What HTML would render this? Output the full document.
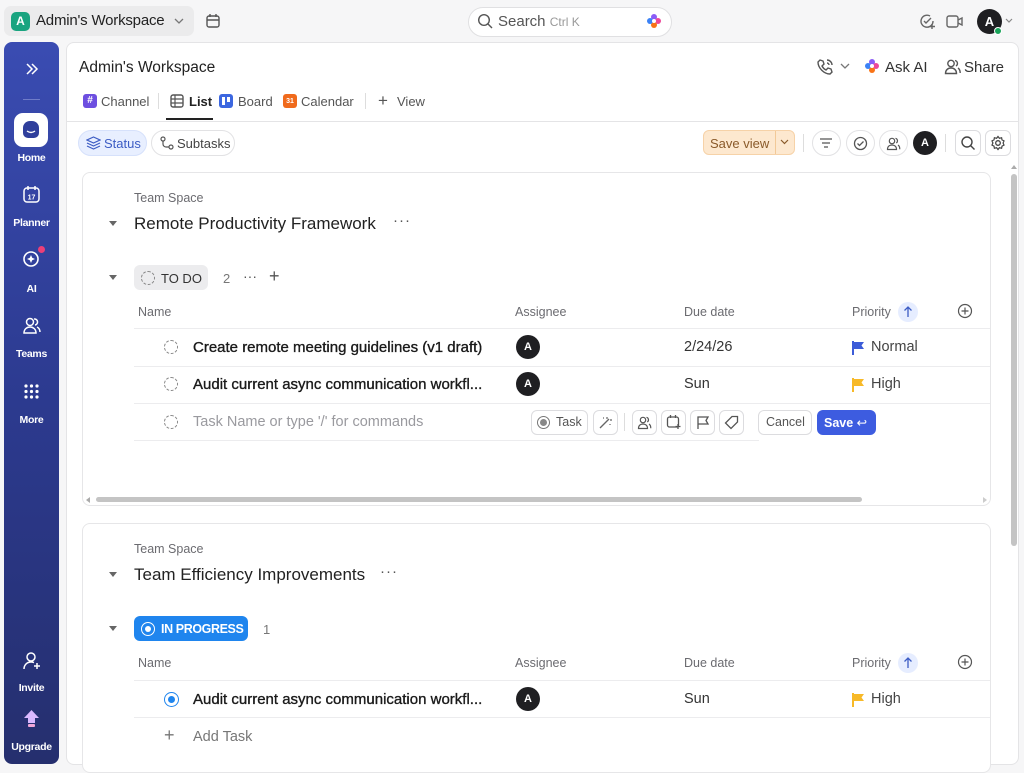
<!DOCTYPE html>
<html><head><meta charset="utf-8"><style>
*{box-sizing:border-box;margin:0;padding:0}
body{width:1024px;height:767px;overflow:hidden;background:#f6f6f7;font-family:"Liberation Sans",sans-serif;color:#222;position:relative}
.a{position:absolute}
.t{white-space:nowrap}
svg{display:block}
.sb{left:4px;top:42px;width:55px;height:722px;border-radius:8px;background:linear-gradient(#3a4cb2,#2c3a8f 50%,#252f6e)}
.nav{left:0;width:55px;text-align:center;color:#fff;font-size:10.5px;font-weight:bold;letter-spacing:-.3px}
.main{left:66px;top:42px;width:953px;height:723px;background:#fff;border:1px solid #e4e4e6;border-radius:8px}
.card{left:82px;width:909px;background:#fff;border:1px solid #e6e6e8;border-radius:8px}
.hdr{font-size:12.5px;color:#6b6b70}
.row{font-size:15px;color:#1a1a1a;-webkit-text-stroke:0.35px #1a1a1a}
.line{height:1px;background:#ececee}
.ib{border:1px solid #dcdcdf;border-radius:6px;background:#fff}
.pill{border:1px solid #e2e2e4;border-radius:14px;background:#fff}
.av{width:24px;height:24px;border-radius:50%;background:#1f1f22;color:#fff;font-size:11px;font-weight:bold;text-align:center;line-height:24px}
.circ{width:14px;height:14px;border-radius:50%;border:1.6px dashed #888}
</style></head><body>

<!-- top bar -->
<div class="a" style="left:4px;top:6px;width:190px;height:30px;background:#ebebec;border-radius:7px"></div>
<div class="a" style="left:11px;top:12px;width:19px;height:19px;background:#1aa480;border-radius:5px;color:#fff;font-size:12px;font-weight:bold;text-align:center;line-height:19px">A</div>
<div class="a t" style="left:36px;top:12px;font-size:15px;color:#222;letter-spacing:-.2px">Admin's Workspace</div>
<svg class="a" style="left:174px;top:17px" width="10" height="8"><path d="M1 2l4 4 4-4" fill="none" stroke="#777" stroke-width="1.3"/></svg>
<svg class="a" style="left:205px;top:13px" width="16" height="16"><rect x="2" y="3" width="12" height="11" rx="2" fill="none" stroke="#555" stroke-width="1.4"/><path d="M5 1v3M11 1v3M2 7h12" stroke="#555" stroke-width="1.4"/></svg>
<div class="a" style="left:468px;top:7px;width:204px;height:30px;border:1px solid #e0e0e2;border-radius:15px;background:#fff"></div>
<svg class="a" style="left:477px;top:13px" width="16" height="16"><circle cx="7" cy="7" r="5.3" fill="none" stroke="#555" stroke-width="1.4"/><path d="M11 11l4 4" stroke="#555" stroke-width="1.4"/></svg>
<div class="a t" style="left:498px;top:13px;font-size:15px;color:#555">Search <span style="font-size:12px;color:#999">Ctrl K</span></div>
<svg class="a" style="left:646px;top:13px" width="16" height="16"><circle cx="8" cy="4" r="3" fill="#8b5cf6"/><circle cx="12" cy="8" r="3" fill="#ec4899"/><circle cx="8" cy="12" r="3" fill="#f97316"/><circle cx="4" cy="8" r="3" fill="#3b82f6"/><circle cx="8" cy="8" r="2" fill="#fff"/></svg>
<svg class="a" style="left:919px;top:13px" width="17" height="17"><path d="M14 8a6 6 0 1 1-3-5" fill="none" stroke="#666" stroke-width="1.4"/><path d="M5 8l2 2 5-5M13 11v5M11 13.5h5" fill="none" stroke="#666" stroke-width="1.4"/></svg>
<svg class="a" style="left:946px;top:14px" width="18" height="15"><rect x="1" y="2" width="11" height="11" rx="2" fill="none" stroke="#666" stroke-width="1.4"/><path d="M12 6l4-2v7l-4-2" fill="none" stroke="#666" stroke-width="1.4"/></svg>
<div class="a av" style="left:977px;top:9px;width:25px;height:25px;line-height:25px;font-size:13px">A</div>
<div class="a" style="left:994px;top:27px;width:8px;height:8px;border-radius:50%;background:#1aa45a;border:1.5px solid #fff"></div>
<svg class="a" style="left:1005px;top:18px" width="8" height="6"><path d="M1 1l3 3 3-3" fill="none" stroke="#888" stroke-width="1.2"/></svg>

<!-- sidebar -->
<div class="a sb">
 <svg class="a" style="left:21px;top:20px" width="14" height="14"><path d="M2 2l5 5-5 5M7 2l5 5-5 5" fill="none" stroke="#fff" stroke-width="1.5"/></svg>
 <div class="a" style="left:19px;top:57px;width:17px;height:1px;background:#6f7cc8"></div>
 <div class="a" style="left:10px;top:71px;width:34px;height:34px;background:#fff;border-radius:9px"></div>
 <div class="a" style="left:19px;top:79px;width:16px;height:17px;background:#2f3f9c;border-radius:7px 7px 5px 5px"></div>
 <svg class="a" style="left:22px;top:88px" width="10" height="5"><path d="M1 1q4 3 8 0" fill="none" stroke="#fff" stroke-width="1.4"/></svg>
 <div class="a nav t" style="top:110px">Home</div>
 <svg class="a" style="left:18px;top:143px" width="19" height="19"><rect x="2" y="3" width="15" height="14" rx="3" fill="none" stroke="#fff" stroke-width="1.5"/><path d="M6 1v4M13 1v4" stroke="#fff" stroke-width="1.5"/><text x="9.5" y="14.5" font-size="7" fill="#fff" text-anchor="middle" font-family="Liberation Sans" font-weight="bold">17</text></svg>
 <div class="a nav t" style="top:175px">Planner</div>
 <svg class="a" style="left:17px;top:207px" width="20" height="20"><circle cx="10" cy="10" r="7" fill="none" stroke="#fff" stroke-width="1.6"/><path d="M10 6l1.2 2.8 2.8 1.2-2.8 1.2L10 14l-1.2-2.8L6 10l2.8-1.2z" fill="#fff"/></svg>
 <div class="a" style="left:34px;top:204px;width:7px;height:7px;border-radius:50%;background:#ec3f78"></div>
 <div class="a nav t" style="top:241px">AI</div>
 <svg class="a" style="left:18px;top:274px" width="19" height="19"><circle cx="8" cy="6" r="3.5" fill="none" stroke="#fff" stroke-width="1.5"/><path d="M2 17c0-4 3-6 6-6s6 2 6 6zM12 3a3 3 0 0 1 1 6M15 11c2 1 3 3 3 5" fill="none" stroke="#fff" stroke-width="1.5"/></svg>
 <div class="a nav t" style="top:306px">Teams</div>
 <svg class="a" style="left:19px;top:341px" width="17" height="17" fill="#fff"><circle cx="3" cy="3" r="1.6"/><circle cx="8.5" cy="3" r="1.6"/><circle cx="14" cy="3" r="1.6"/><circle cx="3" cy="8.5" r="1.6"/><circle cx="8.5" cy="8.5" r="1.6"/><circle cx="14" cy="8.5" r="1.6"/><circle cx="3" cy="14" r="1.6"/><circle cx="8.5" cy="14" r="1.6"/><circle cx="14" cy="14" r="1.6"/></svg>
 <div class="a nav t" style="top:372px">More</div>
 <svg class="a" style="left:18px;top:609px" width="20" height="20"><circle cx="9" cy="6" r="4" fill="none" stroke="#fff" stroke-width="1.5"/><path d="M2 18c0-4 3-7 7-7 1 0 2 .2 3 .6M15 12v6M12 15h6" fill="none" stroke="#fff" stroke-width="1.5"/></svg>
 <div class="a nav t" style="top:640px">Invite</div>
 <svg class="a" style="left:19px;top:667px" width="17" height="20"><path d="M8.5 1L16 9h-4v5H5V9H1z" fill="#d9b8ff"/><rect x="5" y="15" width="7" height="3" rx="1" fill="#f0a6d8"/></svg>
 <div class="a nav t" style="top:699px">Upgrade</div>
</div>

<!-- main -->
<div class="a main"></div>
<div class="a t" style="left:79px;top:59px;font-size:15.5px;color:#222">Admin's Workspace</div>
<svg class="a" style="left:816px;top:58px" width="18" height="18"><path d="M4 2l3 1 1 3-2 2a9 9 0 0 0 4 4l2-2 3 1 1 3-2 2C8 16 2 10 2 4z" fill="none" stroke="#555" stroke-width="1.4"/><path d="M11 2a5 5 0 0 1 5 5M11 5a2 2 0 0 1 2 2" fill="none" stroke="#555" stroke-width="1.4"/></svg>
<svg class="a" style="left:840px;top:63px" width="10" height="7"><path d="M1 1l4 4 4-4" fill="none" stroke="#777" stroke-width="1.3"/></svg>
<svg class="a" style="left:864px;top:58px" width="16" height="16"><circle cx="8" cy="4" r="3" fill="#8b5cf6"/><circle cx="12" cy="8" r="3" fill="#ec4899"/><circle cx="8" cy="12" r="3" fill="#f97316"/><circle cx="4" cy="8" r="3" fill="#3b82f6"/><circle cx="8" cy="8" r="2" fill="#fff"/></svg>
<div class="a t" style="left:885px;top:59px;font-size:15px;color:#333">Ask AI</div>
<svg class="a" style="left:944px;top:58px" width="17" height="17"><circle cx="7" cy="5.5" r="3.2" fill="none" stroke="#555" stroke-width="1.4"/><path d="M1.5 15.5c0-3.5 2.5-5.5 5.5-5.5s5.5 2 5.5 5.5zM11 2.5a3 3 0 0 1 1 5.5M14 10c1.5 1 2.2 3 2.2 5" fill="none" stroke="#555" stroke-width="1.4"/></svg>
<div class="a t" style="left:964px;top:59px;font-size:15px;color:#333">Share</div>

<!-- tabs -->
<div class="a" style="left:83px;top:94px;width:14px;height:14px;background:#6d4fe0;border-radius:3px;color:#fff;font-size:10px;font-weight:bold;text-align:center;line-height:14px">#</div>
<div class="a t" style="left:101px;top:94px;font-size:13px;color:#555">Channel</div>
<div class="a" style="left:158px;top:93px;width:1px;height:16px;background:#ddd"></div>
<svg class="a" style="left:170px;top:94px" width="14" height="14"><rect x="1" y="1" width="12" height="12" rx="2" fill="none" stroke="#555" stroke-width="1.4"/><path d="M1 5h12M1 9h12M5 1v12" stroke="#555" stroke-width="1.2"/></svg>
<div class="a t" style="left:189px;top:94px;font-size:13px;color:#222;font-weight:bold">List</div>
<div class="a" style="left:166px;top:118px;width:47px;height:2px;background:#222"></div>
<div class="a" style="left:219px;top:94px;width:14px;height:14px;background:#3c67e0;border-radius:3px"></div>
<div class="a" style="left:222px;top:97px;width:3px;height:8px;background:#fff"></div><div class="a" style="left:227px;top:97px;width:3px;height:5px;background:#fff"></div>
<div class="a t" style="left:238px;top:94px;font-size:13px;color:#555">Board</div>
<div class="a" style="left:283px;top:94px;width:14px;height:14px;background:#f06a1c;border-radius:3px;color:#fff;font-size:7px;font-weight:bold;text-align:center;line-height:16px">31</div>
<div class="a t" style="left:301px;top:94px;font-size:13px;color:#555">Calendar</div>
<div class="a" style="left:365px;top:93px;width:1px;height:16px;background:#ddd"></div>
<div class="a t" style="left:378px;top:91px;font-size:17px;color:#555">+</div>
<div class="a t" style="left:397px;top:94px;font-size:13px;color:#555">View</div>
<div class="a" style="left:67px;top:121px;width:951px;height:1px;background:#e4e4e6"></div>

<!-- toolbar -->
<div class="a pill" style="left:78px;top:130px;width:69px;height:26px;background:#e8efff;border-color:#d6e1fb"></div>
<svg class="a" style="left:86px;top:136px" width="15" height="14"><path d="M7.5 1L14 4 7.5 7 1 4zM1 7l6.5 3L14 7M1 10l6.5 3 6.5-3" fill="none" stroke="#3c5cc4" stroke-width="1.2"/></svg>
<div class="a t" style="left:104px;top:136px;font-size:13px;color:#3c5cc4">Status</div>
<div class="a pill" style="left:151px;top:130px;width:84px;height:26px"></div>
<svg class="a" style="left:160px;top:136px" width="14" height="14"><circle cx="3" cy="3" r="2" fill="none" stroke="#555" stroke-width="1.2"/><circle cx="11" cy="11" r="2" fill="none" stroke="#555" stroke-width="1.2"/><path d="M3 5v3a3 3 0 0 0 3 3h3" fill="none" stroke="#555" stroke-width="1.2"/></svg>
<div class="a t" style="left:177px;top:136px;font-size:13px;color:#444">Subtasks</div>

<div class="a" style="left:703px;top:130px;width:92px;height:25px;background:#fde8cf;border:1px solid #f6d2a8;border-radius:6px"></div>
<div class="a" style="left:775px;top:131px;width:1px;height:23px;background:#f2c997"></div>
<div class="a t" style="left:710px;top:136px;font-size:13px;color:#8a5a2a">Save view</div>
<svg class="a" style="left:780px;top:139px" width="9" height="6"><path d="M1 1l3.5 3.5L8 1" fill="none" stroke="#8a5a2a" stroke-width="1.2"/></svg>
<div class="a" style="left:803px;top:134px;width:1px;height:18px;background:#ddd"></div>
<div class="a pill" style="left:812px;top:130px;width:29px;height:26px"></div>
<svg class="a" style="left:819px;top:137px" width="14" height="12"><path d="M1 2h12M3 6h8M5 10h4" stroke="#555" stroke-width="1.3"/></svg>
<div class="a pill" style="left:846px;top:130px;width:29px;height:26px"></div>
<svg class="a" style="left:853px;top:136px" width="15" height="15"><circle cx="7.5" cy="7.5" r="6" fill="none" stroke="#555" stroke-width="1.3"/><path d="M4.5 7.5l2 2 4-4" fill="none" stroke="#555" stroke-width="1.3"/></svg>
<div class="a pill" style="left:879px;top:130px;width:29px;height:26px"></div>
<svg class="a" style="left:886px;top:136px" width="15" height="15"><circle cx="6" cy="5" r="2.7" fill="none" stroke="#555" stroke-width="1.2"/><path d="M1.5 13.5c0-3 2-4.5 4.5-4.5s4.5 1.5 4.5 4.5zM9.5 2.3a2.6 2.6 0 0 1 .8 4.7M12 9c1.3.8 1.8 2.5 1.8 4.3" fill="none" stroke="#555" stroke-width="1.2"/></svg>
<div class="a av" style="left:913px;top:131px">A</div>
<div class="a" style="left:945px;top:134px;width:1px;height:18px;background:#ddd"></div>
<div class="a ib" style="left:955px;top:130px;width:26px;height:26px"></div>
<svg class="a" style="left:960px;top:135px" width="16" height="16"><circle cx="7" cy="7" r="5" fill="none" stroke="#444" stroke-width="1.4"/><path d="M10.5 10.5l4 4" stroke="#444" stroke-width="1.4"/></svg>
<div class="a ib" style="left:985px;top:130px;width:26px;height:26px"></div>
<svg class="a" style="left:990px;top:135px" width="16" height="16"><circle cx="8" cy="8" r="2.3" fill="none" stroke="#444" stroke-width="1.3"/><path d="M8 1.5l1.4 1.8 2.2-.6.4 2.2 2 1-.9 2.1.9 2.1-2 1-.4 2.2-2.2-.6L8 14.5l-1.4-1.8-2.2.6-.4-2.2-2-1 .9-2.1-.9-2.1 2-1 .4-2.2 2.2.6z" fill="none" stroke="#444" stroke-width="1.2"/></svg>

<!-- vertical scrollbar -->
<div class="a" style="left:1011px;top:174px;width:6px;height:372px;background:#c4c4c4;border-radius:3px"></div>
<svg class="a" style="left:1010px;top:164px" width="8" height="6"><path d="M4 1L7 5H1z" fill="#aaa"/></svg>

<!-- card 1 -->
<div class="a card" style="top:172px;height:334px"></div>
<div class="a t hdr" style="left:134px;top:191px">Team Space</div>
<svg class="a" style="left:108px;top:220px" width="10" height="7"><path d="M1 1h8L5 6z" fill="#666"/></svg>
<div class="a t" style="left:134px;top:214px;font-size:17px;color:#222">Remote Productivity Framework</div>
<div class="a t" style="left:393px;top:212px;font-size:15px;color:#555;letter-spacing:1px">···</div>

<svg class="a" style="left:108px;top:274px" width="10" height="7"><path d="M1 1h8L5 6z" fill="#666"/></svg>
<div class="a" style="left:134px;top:265px;width:74px;height:25px;background:#ececee;border-radius:6px"></div>
<div class="a circ" style="left:141px;top:271px"></div>
<div class="a t" style="left:161px;top:271px;font-size:13px;color:#333">TO DO</div>
<div class="a t" style="left:223px;top:271px;font-size:13px;color:#777">2</div>
<div class="a t" style="left:243px;top:268px;font-size:14px;color:#555">···</div>
<div class="a t" style="left:269px;top:266px;font-size:18px;color:#555">+</div>

<div class="a t hdr" style="left:138px;top:305px">Name</div>
<div class="a t hdr" style="left:515px;top:305px">Assignee</div>
<div class="a t hdr" style="left:684px;top:305px">Due date</div>
<div class="a t hdr" style="left:852px;top:305px">Priority</div>
<div class="a" style="left:898px;top:302px;width:20px;height:20px;border-radius:50%;background:#e6edff"></div>
<svg class="a" style="left:903px;top:305px" width="10" height="13"><path d="M5 12V2M1.5 5.5L5 2l3.5 3.5" fill="none" stroke="#3c5cc4" stroke-width="1.3"/></svg>
<svg class="a" style="left:957px;top:303px" width="16" height="16"><circle cx="8" cy="8" r="6.5" fill="none" stroke="#555" stroke-width="1.2"/><path d="M8 4.5v7M4.5 8h7" stroke="#555" stroke-width="1.2"/></svg>

<div class="a line" style="left:134px;top:328px;width:856px"></div>
<div class="a circ" style="left:164px;top:340px"></div>
<div class="a t row" style="left:193px;top:339px">Create remote meeting guidelines (v1 draft)</div>
<div class="a av" style="left:516px;top:335px">A</div>
<div class="a t" style="left:684px;top:339px;font-size:14.5px;color:#333">2/24/26</div>
<svg class="a" style="left:851px;top:340px" width="14" height="15"><path d="M2 1v14" stroke="#3c5cd8" stroke-width="2"/><path d="M2 2h11l-2.5 3.5L13 9H2z" fill="#3c5cd8"/></svg>
<div class="a t" style="left:871px;top:339px;font-size:14.5px;color:#444">Normal</div>
<div class="a line" style="left:134px;top:366px;width:856px"></div>
<div class="a circ" style="left:164px;top:377px"></div>
<div class="a t row" style="left:193px;top:376px">Audit current async communication workfl...</div>
<div class="a av" style="left:516px;top:372px">A</div>
<div class="a t" style="left:684px;top:376px;font-size:14.5px;color:#333">Sun</div>
<svg class="a" style="left:851px;top:377px" width="14" height="15"><path d="M2 1v14" stroke="#f7b928" stroke-width="2"/><path d="M2 2h11l-2.5 3.5L13 9H2z" fill="#f7b928"/></svg>
<div class="a t" style="left:871px;top:376px;font-size:14.5px;color:#444">High</div>
<div class="a line" style="left:134px;top:403px;width:856px"></div>
<div class="a circ" style="left:164px;top:415px"></div>
<div class="a t" style="left:193px;top:414px;font-size:14.5px;color:#9a9a9f">Task Name or type '/' for commands</div>
<div class="a ib" style="left:531px;top:410px;width:57px;height:25px"></div>
<div class="a" style="left:537px;top:416px;width:13px;height:13px;border-radius:50%;border:1.5px solid #777"></div>
<div class="a" style="left:540px;top:419px;width:7px;height:7px;border-radius:50%;background:#888"></div>
<div class="a t" style="left:556px;top:415px;font-size:12.5px;color:#555">Task</div>
<div class="a ib" style="left:593px;top:410px;width:25px;height:25px"></div>
<svg class="a" style="left:598px;top:415px" width="15" height="15"><path d="M2 13L11 4" stroke="#666" stroke-width="1.3"/><path d="M9 2v2M12 5h2M12 9v1M5 3h1" stroke="#666" stroke-width="1.2"/></svg>
<div class="a" style="left:624px;top:413px;width:1px;height:18px;background:#ddd"></div>
<div class="a ib" style="left:632px;top:410px;width:25px;height:25px"></div>
<svg class="a" style="left:637px;top:415px" width="15" height="15"><circle cx="6" cy="5" r="2.7" fill="none" stroke="#555" stroke-width="1.2"/><path d="M1.5 13.5c0-3 2-4.5 4.5-4.5s4.5 1.5 4.5 4.5zM9.5 2.3a2.6 2.6 0 0 1 .8 4.7M12 9c1.3.8 1.8 2.5 1.8 4.3" fill="none" stroke="#555" stroke-width="1.2"/></svg>
<div class="a ib" style="left:661px;top:410px;width:25px;height:25px"></div>
<svg class="a" style="left:666px;top:414px" width="16" height="16"><rect x="1.5" y="3" width="11" height="10" rx="2" fill="none" stroke="#555" stroke-width="1.3"/><path d="M4.5 1v3M9.5 1v3M12 10v5M9.5 12.5h5" stroke="#555" stroke-width="1.3"/></svg>
<div class="a ib" style="left:690px;top:410px;width:25px;height:25px"></div>
<svg class="a" style="left:696px;top:415px" width="14" height="15"><path d="M2 14V2h10l-2 3.5 2 3.5H2" fill="none" stroke="#555" stroke-width="1.3"/></svg>
<div class="a ib" style="left:719px;top:410px;width:25px;height:25px"></div>
<svg class="a" style="left:724px;top:415px" width="15" height="15"><path d="M8 1.5h5.5V7L7 13.5 1.5 8z" fill="none" stroke="#555" stroke-width="1.3"/></svg>
<div class="a ib" style="left:758px;top:410px;width:54px;height:25px"></div>
<div class="a t" style="left:766px;top:415px;font-size:12.5px;color:#555">Cancel</div>
<div class="a" style="left:817px;top:410px;width:59px;height:25px;background:#3d5ce0;border-radius:6px"></div>
<div class="a t" style="left:824px;top:415px;font-size:12.5px;color:#fff;font-weight:bold">Save <span style="font-weight:normal">↩</span></div>
<div class="a line" style="left:134px;top:440px;width:625px"></div>
<!-- h scrollbar -->
<div class="a" style="left:96px;top:497px;width:766px;height:5px;background:#c4c4c4;border-radius:3px"></div>
<svg class="a" style="left:85px;top:496px" width="6" height="8"><path d="M5 1v6L1 4z" fill="#aaa"/></svg>
<svg class="a" style="left:982px;top:496px" width="6" height="8"><path d="M1 1v6l4-3z" fill="#ccc"/></svg>

<!-- card 2 -->
<div class="a card" style="top:523px;height:250px"></div>
<div class="a t hdr" style="left:134px;top:542px">Team Space</div>
<svg class="a" style="left:108px;top:571px" width="10" height="7"><path d="M1 1h8L5 6z" fill="#666"/></svg>
<div class="a t" style="left:134px;top:565px;font-size:17px;color:#222">Team Efficiency Improvements</div>
<div class="a t" style="left:380px;top:563px;font-size:15px;color:#555;letter-spacing:1px">···</div>
<svg class="a" style="left:108px;top:625px" width="10" height="7"><path d="M1 1h8L5 6z" fill="#666"/></svg>
<div class="a" style="left:134px;top:616px;width:114px;height:25px;background:#1f85ee;border-radius:6px"></div>
<div class="a" style="left:141px;top:622px;width:14px;height:14px;border-radius:50%;border:1.6px solid #fff"></div>
<div class="a" style="left:145px;top:626px;width:6px;height:6px;border-radius:50%;background:#fff"></div>
<div class="a t" style="left:161px;top:622px;font-size:12.5px;color:#fff;font-weight:bold;letter-spacing:-.4px">IN PROGRESS</div>
<div class="a t" style="left:263px;top:622px;font-size:13px;color:#777">1</div>
<div class="a t hdr" style="left:138px;top:656px">Name</div>
<div class="a t hdr" style="left:515px;top:656px">Assignee</div>
<div class="a t hdr" style="left:684px;top:656px">Due date</div>
<div class="a t hdr" style="left:852px;top:656px">Priority</div>
<div class="a" style="left:898px;top:653px;width:20px;height:20px;border-radius:50%;background:#e6edff"></div>
<svg class="a" style="left:903px;top:656px" width="10" height="13"><path d="M5 12V2M1.5 5.5L5 2l3.5 3.5" fill="none" stroke="#3c5cc4" stroke-width="1.3"/></svg>
<svg class="a" style="left:957px;top:654px" width="16" height="16"><circle cx="8" cy="8" r="6.5" fill="none" stroke="#555" stroke-width="1.2"/><path d="M8 4.5v7M4.5 8h7" stroke="#555" stroke-width="1.2"/></svg>
<div class="a line" style="left:134px;top:680px;width:856px"></div>
<div class="a" style="left:164px;top:692px;width:15px;height:15px;border-radius:50%;border:1.6px solid #1f85ee"></div>
<div class="a" style="left:168px;top:696px;width:7px;height:7px;border-radius:50%;background:#1f85ee"></div>
<div class="a t row" style="left:193px;top:691px">Audit current async communication workfl...</div>
<div class="a av" style="left:516px;top:687px">A</div>
<div class="a t" style="left:684px;top:691px;font-size:14.5px;color:#333">Sun</div>
<svg class="a" style="left:851px;top:692px" width="14" height="15"><path d="M2 1v14" stroke="#f7b928" stroke-width="2"/><path d="M2 2h11l-2.5 3.5L13 9H2z" fill="#f7b928"/></svg>
<div class="a t" style="left:871px;top:691px;font-size:14.5px;color:#444">High</div>
<div class="a line" style="left:134px;top:717px;width:856px"></div>
<div class="a t" style="left:164px;top:725px;font-size:18px;color:#777">+</div>
<div class="a t" style="left:193px;top:729px;font-size:14.5px;color:#777">Add Task</div>
</body></html>
